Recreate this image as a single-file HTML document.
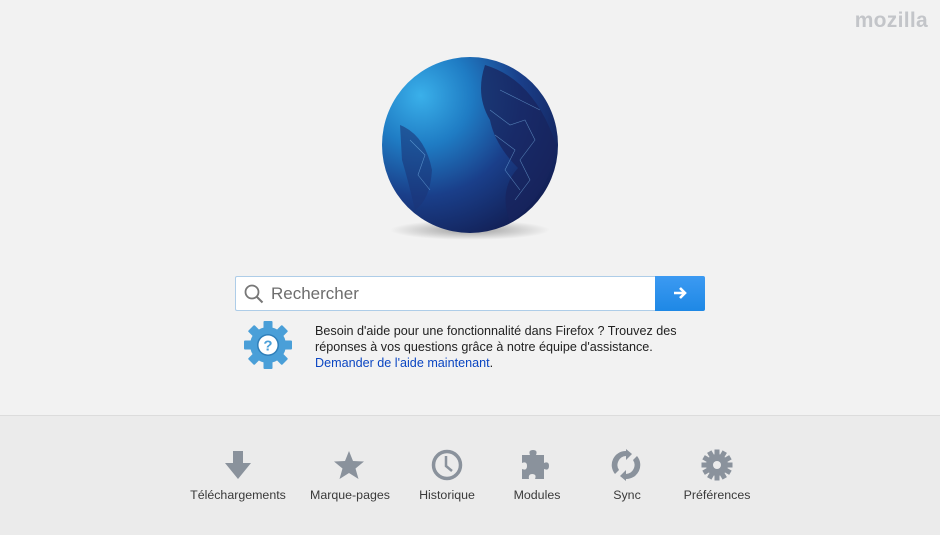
<!DOCTYPE html>
<html><head><meta charset="utf-8"><style>
html,body{margin:0;padding:0}
body{width:940px;height:534px;background:#f2f2f2;font-family:"Liberation Sans",sans-serif;position:relative;overflow:hidden}
.moz{position:absolute;right:12px;top:9px;font-size:21px;font-weight:bold;color:#c3c5c9;letter-spacing:0.3px}
.search{position:absolute;left:235px;top:276px;width:420px;height:35px;background:#fff;border:1px solid #aecde8;box-sizing:border-box;border-right:none;border-radius:2px 0 0 2px}
.search span{position:absolute;left:35px;top:7px;font-size:17px;color:#6d6d6d}
.go{position:absolute;left:655px;top:276px;width:50px;height:35px;background:linear-gradient(#3c9af2,#1e88e5);border-radius:0 2px 2px 0}
.help{position:absolute;left:315px;top:323px;font-size:12.6px;line-height:16px;color:#222}
.help a{color:#0b46c2;text-decoration:none}
.bottom{position:absolute;left:0;top:415px;width:940px;height:119px;background:#ebebeb;border-top:1px solid #dcdcdc}
.it{position:absolute;top:72px;font-size:12.4px;color:#3a3a3a;text-align:center;width:120px}
.bottom svg{position:absolute}
</style></head><body>
<div class="moz">mozilla</div>
<svg style="position:absolute;left:370px;top:50px" width="200" height="200">
<defs>
<radialGradient id="g" cx="0.22" cy="0.22" r="0.95">
<stop offset="0" stop-color="#3ab0ea"/><stop offset="0.3" stop-color="#1f7cc4"/><stop offset="0.6" stop-color="#1a3f8a"/><stop offset="1" stop-color="#111a4c"/></radialGradient>
<radialGradient id="s" cx="0.5" cy="0.5" r="0.5"><stop offset="0" stop-color="#000" stop-opacity="0.35"/><stop offset="1" stop-color="#000" stop-opacity="0"/></radialGradient>
</defs>
<ellipse cx="100" cy="180" rx="80" ry="10" fill="url(#s)"/>
<circle cx="100" cy="95" r="88" fill="url(#g)"/>
<path d="M115 15 Q165 30 186 95 Q180 145 140 172 Q128 140 148 118 Q125 95 120 70 Q105 45 115 15Z" fill="#18245e" opacity="0.75"/>
<path d="M30 75 Q55 85 62 120 Q60 150 45 160 Q38 130 32 110Z" fill="#1a3578" opacity="0.6"/>
<g fill="none" stroke="#8fd2ff" stroke-width="0.6" opacity="0.5">
<path d="M120 60L140 75L155 70L165 90L150 110L160 130L145 150M125 85L145 100L135 120L150 140M40 90L55 105L48 125L60 140M130 40L150 50L170 60"/>
</g>
</svg>
<div class="search"><svg style="position:absolute;left:8px;top:7px" width="20" height="20"><circle cx="8" cy="8" r="6.5" fill="none" stroke="#777" stroke-width="1.8"/><path d="M13 13L18.5 18.5" stroke="#777" stroke-width="2"/></svg><span>Rechercher</span></div>
<div class="go"><svg style="position:absolute;left:17px;top:9px" width="16" height="16"><path d="M2 8H13M8 3L13 8L8 13" fill="none" stroke="#fff" stroke-width="2.6"/></svg></div>
<svg style="position:absolute;left:243px;top:320px" width="50" height="50" viewBox="0 0 50 50">
<g fill="#4a9fd8" transform="translate(25 25)">
<circle r="18"/>
<g id="t"><rect x="-4.5" y="-24" width="9" height="9" rx="1"/></g>
<use href="#t" transform="rotate(45)"/><use href="#t" transform="rotate(90)"/><use href="#t" transform="rotate(135)"/><use href="#t" transform="rotate(180)"/><use href="#t" transform="rotate(225)"/><use href="#t" transform="rotate(270)"/><use href="#t" transform="rotate(315)"/>
<circle r="11" fill="#2f7fba"/><circle r="9.5" fill="#fff"/>
<text x="0" y="5.5" font-size="15" font-weight="bold" fill="#4a9fd8" text-anchor="middle" font-family="Liberation Sans">?</text>
</g></svg>
<div class="help">Besoin d'aide pour une fonctionnalité dans Firefox ? Trouvez des<br>réponses à vos questions grâce à notre équipe d'assistance.<br><a>Demander de l'aide maintenant</a>.</div>
<div class="bottom">
<svg style="left:222px;top:33px" width="32" height="32"><path d="M11 2H21V14H29L16 30L3 14H11Z" fill="#8a929c"/></svg>
<svg style="left:333px;top:33px" width="32" height="32"><path d="M16 2L20 12L31 12.5L22.5 19.5L25.5 30L16 24L6.5 30L9.5 19.5L1 12.5L12 12Z" fill="#8a929c"/></svg>
<svg style="left:431px;top:33px" width="32" height="32"><circle cx="16" cy="16" r="13.5" fill="none" stroke="#8a929c" stroke-width="3.5"/><path d="M15 7V17L21 22" fill="none" stroke="#8a929c" stroke-width="2.5"/></svg>
<svg style="left:520px;top:33px" width="32" height="32"><path d="M2 6H10Q8 1 13 1Q18 1 16 6H24V14Q29 12 29 17Q29 22 24 20V30H15Q17 25 12 25Q8 25 9 30H2V20Q7 22 7 17Q7 12 2 14Z" fill="#8a929c"/></svg>
<svg style="left:610px;top:33px" width="32" height="32"><path d="M16 2A14 14 0 0 0 5 25L9 21A9 9 0 0 1 16 7V11L22 5L16 0Z" fill="#8a929c"/><path d="M16 30A14 14 0 0 0 27 7L23 11A9 9 0 0 1 16 25V21L10 27L16 32Z" fill="#8a929c"/></svg>
<svg style="left:701px;top:33px" width="32" height="32" viewBox="-16 -16 32 32"><g fill="#8a929c"><circle r="11"/><g id="k"><rect x="-2.5" y="-15.5" width="5" height="6"/></g><use href="#k" transform="rotate(30)"/><use href="#k" transform="rotate(60)"/><use href="#k" transform="rotate(90)"/><use href="#k" transform="rotate(120)"/><use href="#k" transform="rotate(150)"/><use href="#k" transform="rotate(180)"/><use href="#k" transform="rotate(210)"/><use href="#k" transform="rotate(240)"/><use href="#k" transform="rotate(270)"/><use href="#k" transform="rotate(300)"/><use href="#k" transform="rotate(330)"/></g><circle r="4" fill="#ebebeb"/></svg>
<div class="it" style="left:178px">Téléchargements</div>
<div class="it" style="left:290px">Marque-pages</div>
<div class="it" style="left:387px">Historique</div>
<div class="it" style="left:477px">Modules</div>
<div class="it" style="left:567px">Sync</div>
<div class="it" style="left:657px">Préférences</div>
</div>
</body></html>
